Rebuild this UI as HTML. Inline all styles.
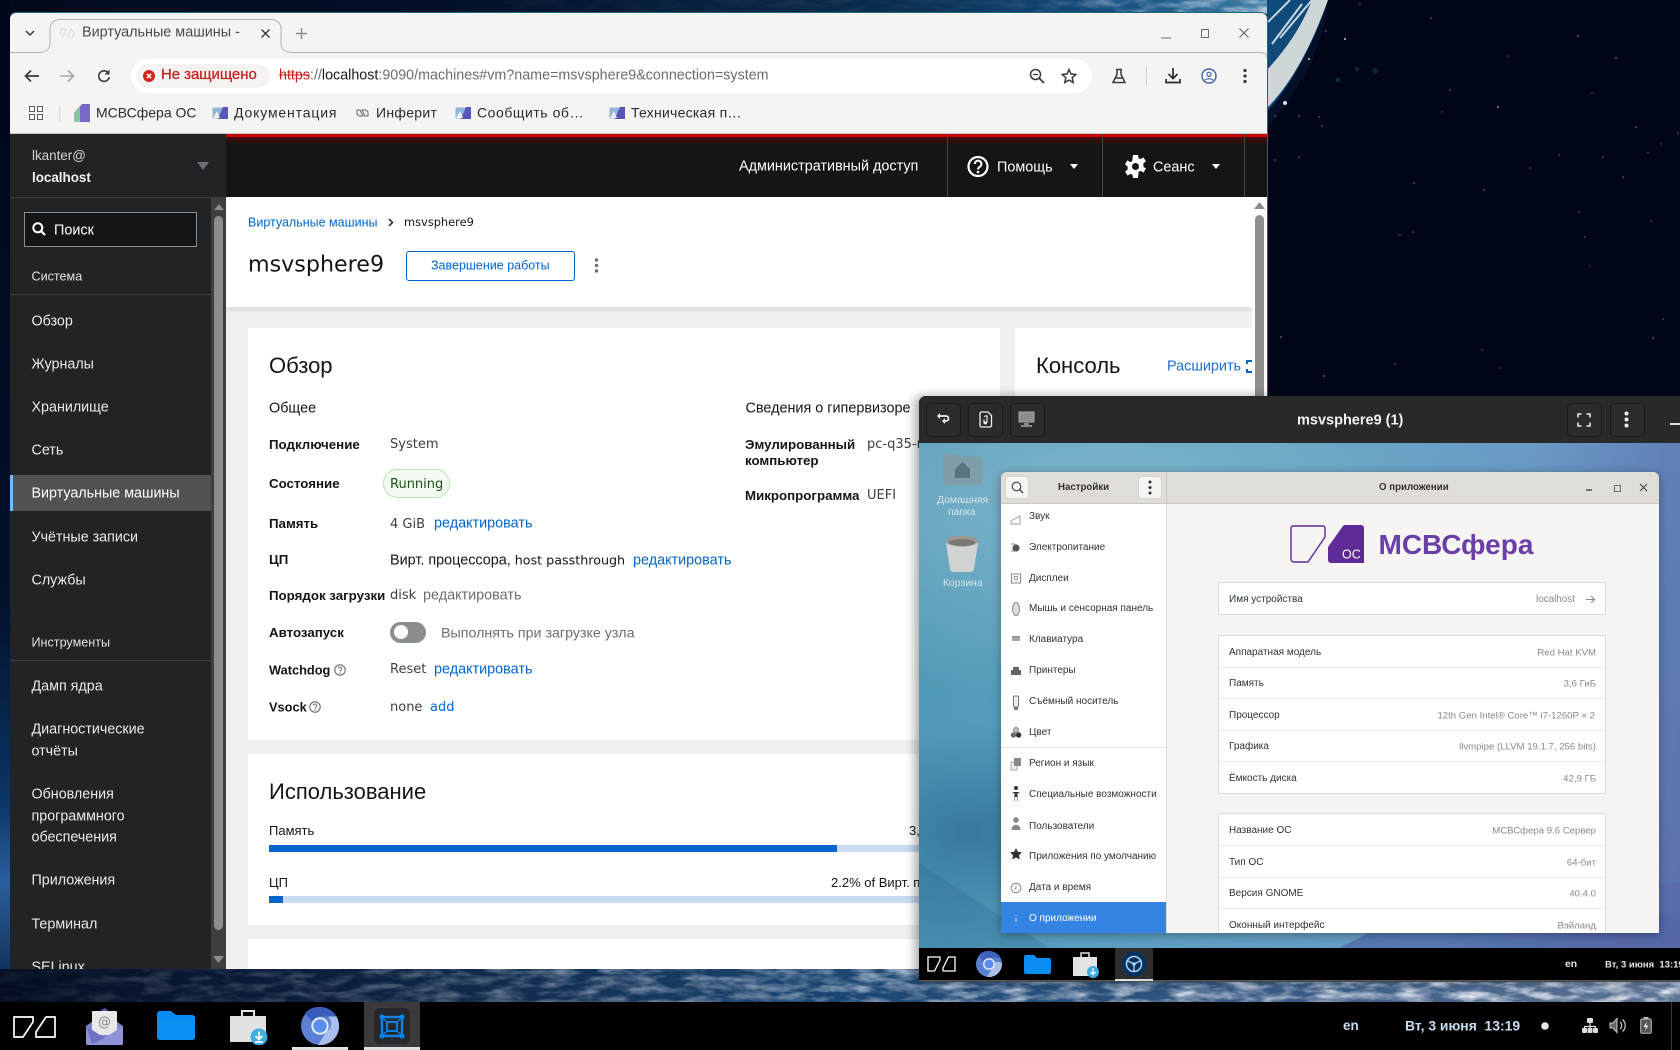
<!DOCTYPE html>
<html lang="ru"><head><meta charset="utf-8"><title>Виртуальные машины</title>
<style>
html,body{margin:0;padding:0;width:1680px;height:1050px;overflow:hidden;background:#000518}
body{position:relative;font-family:"Liberation Sans","DejaVu Sans",sans-serif;font-size:14px;color:#151515}
.a,.t,svg.i{position:absolute}
.t{white-space:nowrap;transform:translateY(-50%);line-height:1.2}
.s{color:#e8e9ea;font-size:14.3px}
.h{font-size:13px;color:#e0e1e2}
.b{font-weight:bold;font-size:13.3px;color:#151515}
.v{font-size:13.4px;color:#151515}
.l{color:#06c}
.d{font-family:"DejaVu Sans","Liberation Sans",sans-serif;font-size:13px}
.g{color:#6a6e73}
.w{color:#fff}
.m{font-size:14px;color:#2b2b2b}
.n{font-size:9.7px;color:#2e3436}
.r{font-size:10px;color:#2e3436}
.q{font-size:9.6px;color:#85898a;right:84px;text-align:right}
.row{position:absolute;left:0;right:0;height:1px;background:#ececeb}
</style></head><body>

<!-- wallpaper -->
<svg class="a" style="left:0;top:0" width="1680" height="1050">
<defs>
<linearGradient id="bs" x1="0" x2="1" y1="0" y2="0"><stop offset="0" stop-color="#050e22"/><stop offset=".2" stop-color="#0b1f3c"/><stop offset=".5" stop-color="#1b4672"/><stop offset=".72" stop-color="#31557f"/><stop offset="1" stop-color="#5e7596"/></linearGradient>
<linearGradient id="ts" x1="0" x2="1" y1="0" y2="0"><stop offset="0" stop-color="#020a1d"/><stop offset=".35" stop-color="#031028"/><stop offset=".7" stop-color="#0a2c4e"/><stop offset=".88" stop-color="#124d7e"/><stop offset="1" stop-color="#3f7ea6"/></linearGradient>
<linearGradient id="ls" x1="0" x2="0" y1="0" y2="1"><stop offset="0" stop-color="#01061a"/><stop offset=".6" stop-color="#03112a"/><stop offset=".8" stop-color="#0b3566"/><stop offset=".88" stop-color="#2a5f9c"/><stop offset="1" stop-color="#0a2346"/></linearGradient>
<linearGradient id="fade" x1="0" x2="1" y1="0" y2="0"><stop offset="0" stop-color="#fff" stop-opacity=".05"/><stop offset=".3" stop-color="#fff" stop-opacity=".4"/><stop offset=".6" stop-color="#fff" stop-opacity=".7"/><stop offset="1" stop-color="#fff" stop-opacity="1"/></linearGradient>
<linearGradient id="fade2" x1="0" x2="1" y1="0" y2="0"><stop offset="0" stop-color="#fff" stop-opacity="0"/><stop offset=".6" stop-color="#fff" stop-opacity=".08"/><stop offset=".75" stop-color="#fff" stop-opacity=".75"/></linearGradient>
<mask id="mk"><rect width="1680" height="1050" fill="url(#fade)"/></mask>
<mask id="mk2"><rect width="1680" height="1050" fill="url(#fade2)"/></mask>
<filter id="cl" x="0" y="0" width="100%" height="100%"><feTurbulence type="fractalNoise" baseFrequency=".035 .13" numOctaves="4" seed="7"/><feColorMatrix values="0 0 0 0 .9 0 0 0 0 .93 0 0 0 0 1 1.6 1.6 0 0 -1.35"/></filter>
</defs>
<rect width="1680" height="1050" fill="#000518"/>
<rect x="0" y="0" width="1267" height="14" fill="url(#ts)"/>
<path d="M1267 0H1328C1315 40 1295 80 1267 112Z" fill="#0f4a78"/>
<path d="M1267 108C1290 85 1310 50 1328 0L1312 0C1300 30 1285 50 1267 70Z" fill="#cfd6d8"/>
<path d="M1290 0L1268 22M1312 0L1280 38M1302 4L1272 44" stroke="#c6d8e2" stroke-width="2" fill="none"/>
<path d="M1267 112C1295 80 1315 40 1328 0C1322 60 1290 100 1267 128Z" fill="#02142e" opacity=".8"/>
<rect x="0" y="0" width="10" height="1002" fill="url(#ls)"/>
<rect x="0" y="969" width="1680" height="34" fill="url(#bs)"/>
<g mask="url(#mk)"><rect x="0" y="969" width="1680" height="34" filter="url(#cl)"/></g>
<g mask="url(#mk2)"><rect x="500" y="0" width="767" height="14" filter="url(#cl)"/></g>
<g fill="#6f7884">
<circle cx="1578" cy="36" r=".9"/><circle cx="1616" cy="58" r=".9"/><circle cx="1508" cy="56" r=".8"/><circle cx="1498" cy="107" r="1.1"/><circle cx="1450" cy="90" r=".8"/><circle cx="1345" cy="39" r="1" fill="#bcc"/><circle cx="1309" cy="59" r="1" fill="#bcc"/><circle cx="1285" cy="103" r="2" fill="#dde"/><circle cx="1360" cy="4" r=".8"/><circle cx="1326" cy="31" r=".8"/><circle cx="1431" cy="18" r=".8"/><circle cx="1636" cy="127" r=".8"/><circle cx="1678" cy="133" r=".8"/><circle cx="1623" cy="177" r=".8"/><circle cx="1661" cy="144" r=".7"/><circle cx="1603" cy="157" r=".8"/><circle cx="1530" cy="168" r=".8"/><circle cx="1484" cy="190" r=".8"/><circle cx="1414" cy="183" r=".8"/><circle cx="1413" cy="232" r=".8"/><circle cx="1400" cy="235" r=".8"/><circle cx="1585" cy="237" r=".7"/><circle cx="1579" cy="212" r=".7"/><circle cx="1651" cy="221" r=".7"/><circle cx="1281" cy="337" r=".9"/><circle cx="1324" cy="376" r=".9"/><circle cx="1395" cy="364" r=".7"/><circle cx="1482" cy="350" r=".7"/><circle cx="1500" cy="368" r=".7"/><circle cx="1653" cy="338" r=".9"/><circle cx="1663" cy="319" r=".7"/><circle cx="1590" cy="266" r=".6"/><circle cx="1275" cy="116" r=".8"/><circle cx="1299" cy="116" r=".8"/><circle cx="1319" cy="117" r=".8"/><circle cx="1322" cy="126" r=".8"/><circle cx="1275" cy="160" r=".8" fill="#4a8"/><circle cx="1299" cy="157" r=".8" fill="#488"/><circle cx="1442" cy="112" r=".7"/><circle cx="1592" cy="93" r=".7"/><circle cx="1648" cy="153" r=".7"/><circle cx="1559" cy="155" r=".7"/>
<circle cx="1338" cy="80" r="2.500" fill="#0a2c3c"/><circle cx="1375" cy="71" r="2.500" fill="#0a2c3c"/><circle cx="1357" cy="69" r="2" fill="#0a2c3c"/>
</g>
</svg>

<!-- browser -->
<div class="a" style="left:10px;top:13px;width:1257px;height:956px;background:#f5f4f2;border-radius:6px 6px 0 0;box-shadow:1px 0 0 #1e6a78,0 -1px 0 #1e6a78;overflow:hidden" id="br">
<svg class="a" style="left:0;top:0" width="1257" height="45"><path d="M0 39.500H28C36 39.500 40 36 40 30V16C40 10 44 6.500 50 6.500H261C267 6.500 271 10 271 16V30C271 36 275 39.500 283 39.500H1251C1254 39.500 1256 41 1257 44" fill="none" stroke="#b4b3b1" stroke-width="1"/></svg>
</div>
<span class="t m" style="left:82px;top:33px;font-size:14.4px;color:#4a4a48;width:163px;overflow:hidden">Виртуальные машины - Веб-консоль</span>
<svg class="i" style="left:24px;top:28px" width="12" height="10"><path d="M2 3l4 4 4-4" fill="none" stroke="#333" stroke-width="1.4"/></svg>
<svg class="i" style="left:59px;top:28px" width="16" height="10"><path d="M2 1l5 0-3 8-3-4zM14 9h-5l3-8 3 4z" fill="none" stroke="#dcdbd9" stroke-width="1"/></svg>
<svg class="i" style="left:260px;top:28px" width="11" height="11"><path d="M1.500 1.500l8 8M9.500 1.500l-8 8" stroke="#333" stroke-width="1.300"/></svg>
<svg class="i" style="left:295px;top:27px" width="13" height="13"><path d="M6.500 1v11M1 6.500h11" stroke="#8f8e8c" stroke-width="1.400"/></svg>
<svg class="i" style="left:1160px;top:31px" width="12" height="8"><path d="M1 6h10" stroke="#8f8e8c" stroke-width="1.300" transform="translate(0,1)"/></svg>
<svg class="i" style="left:1200px;top:28px" width="10" height="11"><rect x="1.500" y="1.500" width="7" height="8" fill="none" stroke="#6d6c6a" stroke-width="1"/></svg>
<svg class="i" style="left:1238px;top:27px" width="12" height="12"><path d="M1.500 1.500l9 9M10.500 1.500l-9 9" stroke="#6d6c6a" stroke-width="1.200"/></svg>

<svg class="i" style="left:24px;top:69px" width="16" height="14"><path d="M15 7H2M7 1.500L1.500 7 7 12.500" fill="none" stroke="#3a3a3a" stroke-width="1.700"/></svg>
<svg class="i" style="left:59px;top:69px" width="16" height="14"><path d="M1 7h13M9 1.500L14.500 7 9 12.500" fill="none" stroke="#aaa9a7" stroke-width="1.600"/></svg>
<svg class="i" style="left:97px;top:69px" width="14" height="14"><path d="M11.500 4.200A5.300 5.300 0 1 0 12.300 8" fill="none" stroke="#3a3a3a" stroke-width="1.600"/><path d="M12.500 0.500v5h-5z" fill="#3a3a3a"/></svg>
<div class="a" style="left:131px;top:59px;width:961px;height:34px;background:#fff;border-radius:17px"></div>
<div class="a" style="left:136px;top:64px;width:134px;height:24px;background:#f4f3f1;border-radius:12px"></div>
<svg class="i" style="left:143px;top:70px" width="12" height="12"><circle cx="6" cy="6" r="6" fill="#d3231c"/><path d="M3.800 3.800l4.400 4.400M8.200 3.800l-4.400 4.400" stroke="#fff" stroke-width="1.400"/></svg>
<span class="t" style="left:161px;top:76px;color:#c5221f;font-size:14.900px;-webkit-text-stroke:.3px #c5221f">Не защищено</span>
<span class="t" style="left:279px;top:76px;font-size:14.300px;color:#6c6c6a"><span style="color:#c5221f;text-decoration:line-through">https</span>://<span style="color:#1a1a1a">localhost</span>:9090/machines#vm?name=msvsphere9&amp;connection=system</span>
<svg class="i" style="left:1029px;top:68px" width="16" height="16"><circle cx="6.500" cy="6.500" r="5" fill="none" stroke="#3a3a3a" stroke-width="1.500"/><path d="M10.500 10.500l4.500 4.500" stroke="#3a3a3a" stroke-width="1.800"/><path d="M4 6.500h5" stroke="#3a3a3a" stroke-width="1.300"/></svg>
<svg class="i" style="left:1061px;top:68px" width="16" height="16"><path d="M8 1.500l2 4.500 4.800.5-3.600 3.200 1 4.800L8 12.100l-4.200 2.400 1-4.800L1.200 6.500 6 6z" fill="none" stroke="#3a3a3a" stroke-width="1.500"/></svg>
<svg class="i" style="left:1111px;top:68px" width="16" height="16"><path d="M5 1.500h6M6 1.500V6.500L2 14.500H14L10 6.500V1.500M4.500 10H11.500" fill="none" stroke="#3a3a3a" stroke-width="1.500"/></svg>
<div class="a" style="left:1146px;top:66px;width:1px;height:20px;background:#d5d4d2"></div>
<svg class="i" style="left:1165px;top:67px" width="16" height="17"><path d="M8 1v10M3.500 7L8 11.500 12.500 7" fill="none" stroke="#2b2b2b" stroke-width="1.700"/><path d="M1 12v3.500h14V12" fill="none" stroke="#2b2b2b" stroke-width="1.700"/></svg>
<svg class="i" style="left:1201px;top:68px" width="16" height="16"><circle cx="8" cy="8" r="7" fill="#fff" stroke="#3f63a8" stroke-width="1.400"/><circle cx="8" cy="6.300" r="2.100" fill="none" stroke="#3f63a8" stroke-width="1.200"/><path d="M3.800 12.300c1-2 7.400-2 8.400 0" fill="none" stroke="#3f63a8" stroke-width="1.200"/></svg>
<svg class="i" style="left:1243px;top:68px" width="4" height="16"><circle cx="2" cy="2.500" r="1.600" fill="#333"/><circle cx="2" cy="8" r="1.600" fill="#333"/><circle cx="2" cy="13.500" r="1.600" fill="#333"/></svg>

<svg class="i" style="left:29px;top:106px" width="14" height="14"><path d="M.5.500h5v5h-5zM8.500.500h5v5h-5zM.5 8.500h5v5h-5zM8.500 8.500h5v5h-5z" fill="none" stroke="#5f5e5c"/></svg>
<div class="a" style="left:59px;top:105px;width:1px;height:16px;background:#d5d4d2"></div>
<svg class="i" style="left:74px;top:104px" width="16" height="18"><path d="M0 9L8 0H16V18H0Z" fill="#7a68c6"/><path d="M0 9L6 3V18H0Z" fill="#8bc6a0"/></svg>
<span class="t m" style="left:96px;top:113px">МСВСфера ОС</span>
<svg class="i" style="left:212px;top:107px" width="16" height="12"><rect x=".5" y=".5" width="15" height="11" fill="#8fb6dc"/><path d="M6 11.500L11 0H16V12H6Z" fill="#5a56b8"/><path d="M1 11L5 4 8 11Z" fill="#eee"/></svg>
<span class="t m" style="left:234px;top:113px;letter-spacing:.85px">Документация</span>
<svg class="i" style="left:356px;top:109px" width="13" height="8"><path d="M1 1h3l3 6H3L1 5zM12 7H9L6 1h4l2 2z" fill="none" stroke="#666" stroke-width="1"/></svg>
<span class="t m" style="left:376px;top:113px;letter-spacing:.3px">Инферит</span>
<svg class="i" style="left:455px;top:107px" width="16" height="12"><rect x=".5" y=".5" width="15" height="11" fill="#8fb6dc"/><path d="M6 11.500L11 0H16V12H6Z" fill="#5a56b8"/><path d="M1 11L5 4 8 11Z" fill="#eee"/></svg>
<span class="t m" style="left:477px;top:113px;letter-spacing:.55px">Сообщить об…</span>
<svg class="i" style="left:609px;top:107px" width="16" height="12"><rect x=".5" y=".5" width="15" height="11" fill="#8fb6dc"/><path d="M6 11.500L11 0H16V12H6Z" fill="#5a56b8"/><path d="M1 11L5 4 8 11Z" fill="#eee"/></svg>
<span class="t m" style="left:631px;top:113px;letter-spacing:.25px">Техническая п…</span>

<!-- cockpit header -->
<div class="a" style="left:10px;top:133px;width:1257px;height:1px;background:#c9c8c6"></div>
<div class="a" style="left:226px;top:134px;width:1041px;height:63px;background:#151515"></div>
<div class="a" style="left:226px;top:134px;width:1041px;height:3px;background:#c9000a"></div>
<div class="a" style="left:226px;top:137px;width:1041px;height:8px;background:linear-gradient(#4a0a0a,#151515)"></div>
<div class="a" style="left:947px;top:134px;width:1px;height:63px;background:#444"></div>
<div class="a" style="left:1102px;top:134px;width:1px;height:63px;background:#444"></div>
<div class="a" style="left:1244px;top:134px;width:1px;height:63px;background:#444"></div>
<span class="t w" style="left:739px;top:167px;font-size:14.4px">Административный доступ</span>
<svg class="i" style="left:967px;top:155px" width="22" height="23"><circle cx="11" cy="11.500" r="9.500" fill="none" stroke="#fff" stroke-width="2.200"/><path d="M7.800 9a3.300 3.300 0 1 1 5 2.800c-1.200.8-1.800 1.400-1.800 2.700" fill="none" stroke="#fff" stroke-width="2"/><circle cx="11" cy="17" r="1.300" fill="#fff"/></svg>
<span class="t w" style="left:997px;top:167.500px;font-size:14.4px">Помощь</span>
<svg class="i" style="left:1070px;top:164px" width="8" height="6"><path d="M0 0h8L4 5z" fill="#fff"/></svg>
<svg class="i" style="left:1125px;top:155px" width="21" height="23" viewBox="0 0 21 23"><path fill="#fff" fill-rule="evenodd" d="M8 0h5l.6 3.200 2 .9 2.800-1.700 2.500 4-2.500 2v3.200l2.500 2-2.500 4-2.800-1.700-2 .9L13 23H8l-.6-3.200-2-.9-2.800 1.700-2.500-4 2.500-2V11.400L-.1 9.400l2.500-4 2.800 1.700 2-.9zM10.500 8a3.500 3.500 0 1 0 0 7 3.500 3.500 0 0 0 0-7z"/></svg>
<span class="t w" style="left:1153px;top:167.500px;font-size:14.4px">Сеанс</span>
<svg class="i" style="left:1212px;top:164px" width="8" height="6"><path d="M0 0h8L4 5z" fill="#fff"/></svg>

<!-- sidebar -->
<div class="a" style="left:10px;top:134px;width:216px;height:835px;background:#212427;overflow:hidden">
  <div class="a" style="left:0;top:63px;width:216px;height:1px;background:#3c3f42"></div>
  <div class="a" style="left:201px;top:64px;width:15px;height:771px;background:#3c3f42"></div>
  <div class="a" style="left:204px;top:82px;width:9px;height:714px;background:#8a8d90;border-radius:5px"></div>
  <div class="a" style="left:0;top:341px;width:201px;height:36px;background:#4f5255"></div>
  <div class="a" style="left:0;top:341px;width:3px;height:36px;background:#73bcf7"></div>
  <div class="a" style="left:0;top:160px;width:201px;height:1px;background:#3c3f42"></div>
  <div class="a" style="left:0;top:526px;width:201px;height:1px;background:#3c3f42"></div>
</div>
<svg class="i" style="left:214px;top:204px" width="10" height="7"><path d="M5 0l5 6H0z" fill="#8a8d90"/></svg>
<svg class="i" style="left:213px;top:956px" width="11" height="7"><path d="M5.500 7L11 0H0z" fill="#8a8d90"/></svg>
<svg class="i" style="left:197px;top:162px" width="12" height="8"><path d="M0 0h12L6 8z" fill="#6a6e73"/></svg>
<span class="t h" style="left:32px;top:155.500px;font-size:13.4px;color:#d2d2d2">lkanter@</span>
<span class="t h" style="left:32px;top:178px;font-weight:bold;font-size:13.4px;color:#f0f0f0">localhost</span>
<div class="a" style="left:24px;top:212px;width:171px;height:33px;background:#151515;border:1px solid #8a8d90"></div>
<svg class="i" style="left:32px;top:222px" width="14" height="14"><circle cx="5.800" cy="5.800" r="4.500" fill="none" stroke="#fff" stroke-width="2"/><path d="M9 9l4 4" stroke="#fff" stroke-width="2.200"/></svg>
<span class="t w" style="left:54px;top:230.500px;font-size:14.4px">Поиск</span>
<span class="t h" style="left:31.500px;top:276.500px;font-size:12.6px">Система</span>
<span class="t s" style="left:31.500px;top:322px">Обзор</span>
<span class="t s" style="left:31.500px;top:365px">Журналы</span>
<span class="t s" style="left:31.500px;top:408px">Хранилище</span>
<span class="t s" style="left:31.500px;top:451px">Сеть</span>
<span class="t s" style="left:31.500px;top:494px;color:#fff">Виртуальные машины</span>
<span class="t s" style="left:31.500px;top:538px">Учётные записи</span>
<span class="t s" style="left:31.500px;top:581px">Службы</span>
<span class="t h" style="left:31.500px;top:642.500px;font-size:12.6px">Инструменты</span>
<span class="t s" style="left:31.500px;top:687px">Дамп ядра</span>
<span class="t s" style="left:31.500px;top:730px">Диагностические</span>
<span class="t s" style="left:31.500px;top:752px">отчёты</span>
<span class="t s" style="left:31.500px;top:795px">Обновления</span>
<span class="t s" style="left:31.500px;top:817px">программного</span>
<span class="t s" style="left:31.500px;top:838px">обеспечения</span>
<span class="t s" style="left:31.500px;top:881px">Приложения</span>
<span class="t s" style="left:31.500px;top:925px">Терминал</span>
<div class="a" style="left:10px;top:950px;width:201px;height:19px;overflow:hidden"><span class="t s" style="left:21.500px;top:18px">SELinux</span></div>

<!-- main content -->
<div class="a" style="left:226px;top:197px;width:1041px;height:772px;background:#fff;box-shadow:1px 0 0 #1e6a78"></div>
<div class="a" style="left:226px;top:307px;width:1026px;height:662px;background:#f0f0f0"></div>
<div class="a" style="left:226px;top:304px;width:1026px;height:3px;box-shadow:0 3px 4px rgba(0,0,0,.12)"></div>
<svg class="i" style="left:1254px;top:202px" width="11" height="7"><path d="M5.500 0L11 7H0z" fill="#8a8a8a"/></svg>
<div class="a" style="left:1255px;top:215px;width:9px;height:185px;background:#8f8f8f;border-radius:5px 5px 0 0"></div>
<span class="t l" style="left:248px;top:222.500px;font-size:12.5px">Виртуальные машины</span>
<svg class="i" style="left:388px;top:218px" width="6" height="9"><path d="M1 1l3.500 3.500L1 8" fill="none" stroke="#222" stroke-width="1.500"/></svg>
<span class="t d" style="left:404px;top:222.500px;font-size:11.400px">msvsphere9</span>
<span class="t d" style="left:248px;top:265px;font-size:22.200px">msvsphere9</span>
<div class="a" style="left:406px;top:251px;width:167px;height:28px;border:1px solid #06c;border-radius:3px;background:#fff"></div>
<span class="t l" style="left:431px;top:265.500px;font-size:12.500px">Завершение работы</span>
<svg class="i" style="left:594px;top:258px" width="5" height="15"><circle cx="2.500" cy="2" r="1.700" fill="#6a6e73"/><circle cx="2.500" cy="7.500" r="1.700" fill="#6a6e73"/><circle cx="2.500" cy="13" r="1.700" fill="#6a6e73"/></svg>

<div class="a" style="left:248px;top:328px;width:752px;height:412px;background:#fff"></div>
<div class="a" style="left:248px;top:754px;width:752px;height:171px;background:#fff"></div>
<div class="a" style="left:248px;top:939px;width:752px;height:30px;background:#fff"></div>
<div class="a" style="left:1015px;top:328px;width:237px;height:641px;background:#fff"></div>

<span class="t" style="left:269px;top:366px;font-size:22px">Обзор</span>
<span class="t v" style="left:269px;top:409px;font-size:14.400px">Общее</span>
<span class="t v" style="left:745.500px;top:409px;font-size:14.400px">Сведения о гипервизоре</span>
<span class="t b" style="left:269px;top:444.500px">Подключение</span>
<span class="t d g" style="left:390px;top:445px;color:#3c3f42;font-size:13px">System</span>
<span class="t b" style="left:269px;top:483.500px">Состояние</span>
<div class="a" style="left:383px;top:469px;width:65px;height:27px;border:1px solid #bde2b9;background:#f3faf2;border-radius:15px"></div>
<span class="t d" style="left:390px;top:484.500px;color:#1e4f18;font-size:13px">Running</span>
<span class="t b" style="left:269px;top:524px">Память</span>
<span class="t d" style="left:390px;top:524.500px;color:#3c3f42">4 GiB</span>
<span class="t v l" style="left:434px;top:524px;font-size:14.400px">редактировать</span>
<span class="t b" style="left:269px;top:559.500px">ЦП</span>
<span class="t v" style="left:390px;top:560.500px;font-size:14.400px">Вирт. процессора, <span style="font-family:'DejaVu Sans';font-size:12.700px">host passthrough</span></span>
<span class="t v l" style="left:633px;top:560.500px;font-size:14.400px">редактировать</span>
<span class="t b" style="left:269px;top:595.500px">Порядок загрузки</span>
<span class="t d" style="left:390px;top:595.500px;color:#3c3f42">disk</span>
<span class="t v g" style="left:423px;top:595.500px;font-size:14.400px;color:#6a6e73">редактировать</span>
<span class="t b" style="left:269px;top:633px">Автозапуск</span>
<div class="a" style="left:390px;top:622px;width:36px;height:21px;background:#8a8d90;border-radius:11px"></div>
<div class="a" style="left:394px;top:625px;width:14px;height:14px;background:#fff;border-radius:7px"></div>
<span class="t v g" style="left:441px;top:634px;font-size:14.250px">Выполнять при загрузке узла</span>
<span class="t b" style="left:269px;top:669.500px;font-size:12.800px">Watchdog</span>
<svg class="i" style="left:334px;top:664px" width="12" height="12"><circle cx="6" cy="6" r="5.200" fill="none" stroke="#6a6e73" stroke-width="1.100"/><path d="M4.300 4.700a1.700 1.700 0 1 1 2.600 1.500c-.6.400-.9.700-.9 1.300" fill="none" stroke="#6a6e73"/><circle cx="6" cy="9" r=".7" fill="#6a6e73"/></svg>
<span class="t d" style="left:390px;top:670px;color:#3c3f42">Reset</span>
<span class="t v l" style="left:434px;top:670px;font-size:14.400px">редактировать</span>
<span class="t b" style="left:269px;top:707px;font-size:12.800px">Vsock</span>
<svg class="i" style="left:309px;top:701px" width="12" height="12"><circle cx="6" cy="6" r="5.200" fill="none" stroke="#6a6e73" stroke-width="1.100"/><path d="M4.300 4.700a1.700 1.700 0 1 1 2.600 1.500c-.6.400-.9.700-.9 1.300" fill="none" stroke="#6a6e73"/><circle cx="6" cy="9" r=".7" fill="#6a6e73"/></svg>
<span class="t d" style="left:390px;top:707.500px;color:#3c3f42">none</span>
<span class="t d l" style="left:430px;top:707.500px">add</span>
<span class="t b" style="left:745px;top:444.500px">Эмулированный</span>
<span class="t b" style="left:745px;top:461px">компьютер</span>
<span class="t d" style="left:867px;top:444.500px;color:#3c3f42">pc-q35-rhel9</span>
<span class="t b" style="left:745px;top:495.500px">Микропрограмма</span>
<span class="t d" style="left:867px;top:495.500px;color:#3c3f42">UEFI</span>

<span class="t" style="left:269px;top:791.500px;font-size:22px">Использование</span>
<span class="t v" style="left:269px;top:830.500px;font-size:13px">Память</span>
<div class="a" style="left:269px;top:845px;width:660px;height:7px;background:#c9dcf2"></div>
<div class="a" style="left:269px;top:845px;width:568px;height:7px;background:#06c"></div>
<span class="t v" style="left:909px;top:830.500px;font-size:13px">3,5 / 4 GiB</span>
<span class="t v" style="left:269px;top:883px;font-size:13px">ЦП</span>
<span class="t v" style="left:831px;top:883px;font-size:13px">2.2% of Вирт. процессора</span>
<div class="a" style="left:269px;top:896px;width:660px;height:7px;background:#c9dcf2"></div>
<div class="a" style="left:269px;top:896px;width:14px;height:7px;background:#06c"></div>

<span class="t" style="left:1036px;top:366px;font-size:22px">Консоль</span>
<span class="t l" style="left:1167px;top:367px;font-size:14.400px;color:#1a6fd0">Расширить</span>
<svg class="i" style="left:1246px;top:360px" width="6" height="13"><path d="M6 1H1v3M1 9v3h5" fill="none" stroke="#06c" stroke-width="2"/></svg>

<!-- VM window -->
<div class="a" style="left:919px;top:396px;width:761px;height:585px;background:#000;box-shadow:-4px 0 10px rgba(0,0,0,.35),0 1px 0 #555;border-radius:7px 0 0 0;overflow:hidden">
  <div class="a" style="left:0;top:0;width:761px;height:47px;background:#292929"></div>
  <div class="a" style="left:0;top:47px;width:761px;height:505px;background:radial-gradient(ellipse 160px 110px at 50px 390px,rgba(47,111,150,.8) 0%,rgba(47,111,150,0) 100%),radial-gradient(ellipse 420px 200px at 180px 60px,#7fb4cb 0%,rgba(127,180,203,0) 100%),linear-gradient(100deg,#4e9ab6 0%,#5ea0c2 40%,#6a9ac4 72%,#5a70ae 100%)"></div>
  <svg class="a" style="left:0;top:47px" width="761" height="505"><path d="M420 505L490 470H761V505Z" fill="#41569a" opacity=".5"/><path d="M640 505L700 440H761V505Z" fill="#5c69ad" opacity=".6"/><path d="M0 420L130 505H0Z" fill="#2e6d94" opacity=".35"/></svg>
  <div class="a" style="left:0;top:552px;width:761px;height:32px;background:#000"></div>
  <div class="a" style="left:0;top:584px;width:761px;height:1px;background:#555"></div>
</div>
<div class="a" style="left:926px;top:403px;width:33px;height:32px;background:#2b2b2b;border:1px solid #1a1a1a;border-radius:5px"></div>
<div class="a" style="left:968px;top:403px;width:33px;height:32px;background:#2b2b2b;border:1px solid #1a1a1a;border-radius:5px"></div>
<div class="a" style="left:1010px;top:403px;width:33px;height:32px;background:#2b2b2b;border:1px solid #1a1a1a;border-radius:5px"></div>
<div class="a" style="left:1567px;top:403px;width:33px;height:32px;background:#2b2b2b;border:1px solid #1a1a1a;border-radius:5px"></div>
<div class="a" style="left:1610px;top:403px;width:33px;height:32px;background:#2b2b2b;border:1px solid #1a1a1a;border-radius:5px"></div>
<svg class="i" style="left:936px;top:412px" width="15" height="15"><path d="M2 4h8a2.500 2.500 0 0 1 0 5H7" fill="none" stroke="#eee" stroke-width="1.800"/><path d="M4 1L1 4l3 3z" fill="#eee"/><path d="M9 6l-3 3 3 3z" fill="#eee"/></svg>
<svg class="i" style="left:978px;top:411px" width="15" height="17"><path d="M2 2.500a1.500 1.500 0 0 1 1.500-1.500H10l3.500 3.500v10A1.500 1.500 0 0 1 12 16H3.500A1.500 1.500 0 0 1 2 14.500z" fill="none" stroke="#eee" stroke-width="1.300"/><path d="M9 4.500v7M6 8.500v4" stroke="#eee" stroke-width="1.200"/><circle cx="7.500" cy="12" r="1.500" fill="#eee"/><path d="M6 5.500l3-1" stroke="#eee"/></svg>
<svg class="i" style="left:1018px;top:411px" width="17" height="17"><rect x="1" y="1" width="15" height="10" fill="#8c8c8c" stroke="#aaa"/><path d="M6 12h5v2h3v2H3v-2h3z" fill="#888"/></svg>
<span class="t w" style="left:1297px;top:421px;font-weight:bold;font-size:14.500px;color:#f2f2f2">msvsphere9 (1)</span>
<svg class="i" style="left:1577px;top:413px" width="14" height="14"><path d="M1 4.500V1h3.500M9.500 1H13v3.500M13 9.500V13H9.500M4.500 13H1V9.500" fill="none" stroke="#eee" stroke-width="1.500"/></svg>
<svg class="i" style="left:1624px;top:411px" width="5" height="17"><circle cx="2.500" cy="2.500" r="2" fill="#eee"/><circle cx="2.500" cy="8.500" r="2" fill="#eee"/><circle cx="2.500" cy="14.500" r="2" fill="#eee"/></svg>
<div class="a" style="left:1670px;top:423px;width:10px;height:1.500px;background:#ddd"></div>

<!-- desktop icons -->
<svg class="i" style="left:942px;top:454px" width="41" height="31"><path d="M1 3a3 3 0 0 1 3-3h10l3 3h20a3 3 0 0 1 3 3v22a3 3 0 0 1-3 3H4a3 3 0 0 1-3-3z" fill="#7f9ea9"/><path d="M13 15l7.500-7 7.500 7v9H13z" fill="#55757f" /></svg>
<span class="t" style="left:937px;top:500.500px;font-size:10.400px;color:#d7e4ea">Домашняя</span>
<span class="t" style="left:948px;top:513px;font-size:10.400px;color:#d7e4ea">папка</span>
<svg class="i" style="left:945px;top:535px" width="34" height="38"><path d="M1 8L5 34a4 4 0 0 0 4 3H25a4 4 0 0 0 4-3L33 8Z" fill="#cfd3d2"/><ellipse cx="17" cy="6" rx="16" ry="5.500" fill="#9a9a95"/><ellipse cx="17" cy="7.500" rx="13" ry="3.500" fill="#7a7a75"/></svg>
<span class="t" style="left:943px;top:584px;font-size:10.400px;color:#d7e4ea">Корзина</span>

<!-- settings window -->
<div class="a" style="left:1001px;top:472px;width:658px;height:461px;background:#f6f5f4;border-radius:6px 6px 0 0;box-shadow:0 2px 10px rgba(0,0,0,.35);overflow:hidden">
  <div class="a" style="left:0;top:0;width:658px;height:31px;background:#e0ddd8;border-bottom:1px solid #cdc7c2"></div>
  <div class="a" style="left:0;top:32px;width:165px;height:429px;background:#fff;border-right:1px solid #dcdad7"></div>
  <div class="a" style="left:165px;top:0;width:1px;height:32px;background:#cdc7c2"></div>
  <div class="a" style="left:0;top:275px;width:165px;height:1px;background:#e6e5e3"></div>
  <div class="a" style="left:0;top:430px;width:165px;height:31px;background:#3584e4"></div>
  <div class="a" style="left:5px;top:5px;width:22px;height:21px;background:#f6f5f4;border-radius:3px;box-shadow:0 0 1px #aaa"></div>
  <div class="a" style="left:138px;top:5px;width:22px;height:21px;background:#f6f5f4;border-radius:3px;box-shadow:0 0 1px #aaa"></div>
  <div class="a" style="left:218px;top:111px;width:386px;height:31px;background:#fff;box-shadow:0 0 0 1px #dcdad7"></div>
  <div class="a" style="left:218px;top:164px;width:386px;height:157px;background:#fff;box-shadow:0 0 0 1px #dcdad7">
    <div class="row" style="top:31px"></div><div class="row" style="top:62px"></div><div class="row" style="top:94px"></div><div class="row" style="top:125px"></div>
  </div>
  <div class="a" style="left:218px;top:342px;width:386px;height:130px;background:#fff;box-shadow:0 0 0 1px #dcdad7">
    <div class="row" style="top:31px"></div><div class="row" style="top:63px"></div><div class="row" style="top:94px"></div>
  </div>
</div>
<svg class="i" style="left:1011px;top:481px" width="13" height="13"><circle cx="5.500" cy="5.500" r="4.300" fill="none" stroke="#3d3d3d" stroke-width="1.100"/><path d="M8.500 8.500l3.500 3.500" stroke="#3d3d3d" stroke-width="1.300"/></svg>
<svg class="i" style="left:1148px;top:480px" width="4" height="15"><circle cx="2" cy="2" r="1.500" fill="#2e3436"/><circle cx="2" cy="7.500" r="1.500" fill="#2e3436"/><circle cx="2" cy="13" r="1.500" fill="#2e3436"/></svg>
<span class="t n" style="left:1058px;top:487.500px;font-weight:bold">Настройки</span>
<span class="t n" style="left:1379px;top:487.500px;font-weight:bold">О приложении</span>
<div class="a" style="left:1586px;top:489px;width:6px;height:1.500px;background:#6f6f6c"></div>
<div class="a" style="left:1614px;top:485px;width:5px;height:5px;border:1px solid #6f6f6c"></div>
<svg class="i" style="left:1639px;top:483px" width="9" height="9"><path d="M1 1l7 7M8 1L1 8" stroke="#444" stroke-width="1.100"/></svg>

<!-- settings list -->
<span class="t r" style="left:1029px;top:516.500px">Звук</span>
<span class="t r" style="left:1029px;top:547.500px">Электропитание</span>
<span class="t r" style="left:1029px;top:578.500px">Дисплеи</span>
<span class="t r" style="left:1029px;top:609px">Мышь и сенсорная панель</span>
<span class="t r" style="left:1029px;top:640px">Клавиатура</span>
<span class="t r" style="left:1029px;top:671px">Принтеры</span>
<span class="t r" style="left:1029px;top:702px">Съёмный носитель</span>
<span class="t r" style="left:1029px;top:733px">Цвет</span>
<span class="t r" style="left:1029px;top:764px">Регион и язык</span>
<span class="t r" style="left:1029px;top:795px">Специальные возможности</span>
<span class="t r" style="left:1029px;top:826.500px">Пользователи</span>
<span class="t r" style="left:1029px;top:857px">Приложения по умолчанию</span>
<span class="t r" style="left:1029px;top:888px">Дата и время</span>
<span class="t r" style="left:1029px;top:919px;color:#fff">О приложении</span>
<svg class="i" style="left:1010px;top:511px" width="12" height="424" viewBox="0 0 12 424">
<path d="M1 10l9-5v8H1z" fill="none" stroke="#999" stroke-width=".9"/>
<circle cx="6" cy="37" r="3.600" fill="#555"/><path d="M1 33h4M1 40h4" stroke="#888"/>
<rect x="1.500" y="63" width="9" height="9" fill="none" stroke="#888"/><circle cx="6" cy="67" r="1.800" fill="none" stroke="#888"/>
<ellipse cx="6" cy="98" rx="3.400" ry="6.500" fill="#ddd" stroke="#888"/>
<path d="M2 125h8v5H2z" fill="#888"/><path d="M2 127h8M2 129h8" stroke="#fff" stroke-width=".5"/>
<path d="M3 156h6v3H3zM1 159h10v5H1z" fill="#666"/>
<rect x="3.500" y="185" width="5" height="11" rx="1" fill="#eee" stroke="#777"/><path d="M4 196v3h4v-3" fill="#777"/>
<circle cx="6" cy="219" r="2.500" fill="#bbb" stroke="#666" stroke-width=".7"/><circle cx="3.400" cy="224" r="2.700" fill="#666"/><circle cx="8.600" cy="224" r="2.700" fill="#333"/>
<rect x="1" y="251" width="6" height="8" fill="#eee" stroke="#888" stroke-width=".7"/><rect x="4" y="247" width="7" height="8" fill="#888"/>
<circle cx="6" cy="277" r="2" fill="#333"/><path d="M2 281h8l-2.500 1.500V290H7v-4H5v4H4.500v-7.500z" fill="#333"/>
<circle cx="6" cy="309" r="2.800" fill="#888"/><path d="M1.500 319c0-7 9-7 9 0z" fill="#888"/>
<path d="M6 337l1.800 3.800 4.200.5-3 2.900.8 4.300-3.800-2-3.800 2 .8-4.300-3-2.900 4.200-.5z" fill="#333"/>
<circle cx="6" cy="377" r="4.800" fill="none" stroke="#888"/><path d="M6 374.500V377l-2 1.500" fill="none" stroke="#888" stroke-width=".8"/>
<path d="M6 404v1.200M6 407v4" stroke="#cfe2f8" stroke-width="1"/>
</svg>

<!-- logo -->
<svg class="i" style="left:1290px;top:525px" width="75" height="39" viewBox="0 0 75 39"><path d="M1 3a2 2 0 0 1 2-2h30a2 2 0 0 1 2 2v9L18 37H4a3 3 0 0 1-3-3z" fill="none" stroke="#5e2b97" stroke-width="1.400" /><path d="M38 22L53 1a3 3 0 0 1 2-1h16a3 3 0 0 1 3 3v35H41a3 3 0 0 1-3-3z" fill="#5e2b97"/></svg>
<span class="t w" style="left:1342px;top:555px;font-size:12.500px">ОС</span>
<span class="t" style="left:1378.500px;top:545px;font-size:28px;font-weight:bold;color:#6a3fa8">МСВСфера</span>

<!-- rows -->
<span class="t r" style="left:1229px;top:599.500px">Имя устройства</span>
<span class="t r" style="left:1536px;top:599.500px;color:#86898a;font-size:9.900px">localhost</span>
<svg class="i" style="left:1586px;top:595px" width="10" height="9"><path d="M0 4.500h8M5 1l3.500 3.500L5 8" fill="none" stroke="#86898a"/></svg>
<span class="t r" style="left:1229px;top:652.500px">Аппаратная модель</span><span class="t q" style="top:652.500px">Red Hat KVM</span>
<span class="t r" style="left:1229px;top:683.500px">Память</span><span class="t q" style="top:683.500px">3,6 ГиБ</span>
<span class="t r" style="left:1229px;top:715.500px">Процессор</span><span class="t q" style="top:715.500px;right:85px">12th Gen Intel® Core™ i7-1260P × 2</span>
<span class="t r" style="left:1229px;top:747px">Графика</span><span class="t q" style="top:747px">llvmpipe (LLVM 19.1.7, 256 bits)</span>
<span class="t r" style="left:1229px;top:778.500px">Ёмкость диска</span><span class="t q" style="top:778.500px">42,9 ГБ</span>
<span class="t r" style="left:1229px;top:831px">Название ОС</span><span class="t q" style="top:831px">МСВСфера 9.6 Сервер</span>
<span class="t r" style="left:1229px;top:862.500px">Тип ОС</span><span class="t q" style="top:862.500px">64-бит</span>
<span class="t r" style="left:1229px;top:894px">Версия GNOME</span><span class="t q" style="top:894px">40.4.0</span>
<span class="t r" style="left:1229px;top:925.500px">Оконный интерфейс</span><span class="t q" style="top:925.500px">Вэйланд</span>

<!-- VM panel -->
<svg class="i" style="left:927px;top:955px" width="29" height="18"><path d="M1 2h12v3L7.500 16H1zM28 16H16v-3L21.500 2H28z" fill="none" stroke="#fff" stroke-width="1.300"/></svg>
<svg class="i" style="left:976px;top:951px" width="26" height="26"><circle cx="13" cy="13" r="13" fill="#5a7fd0"/><path d="M13 0a13 13 0 0 1 11.500 7H13a6 6 0 0 0-5.500 3.500L3 4a13 13 0 0 1 10-4z" fill="#3f62ba"/><path d="M26 13a13 13 0 0 1-15 12.800L16 18a6 6 0 0 0 2-7h6a13 13 0 0 1 2 2z" fill="#a9bfe8"/><circle cx="13" cy="13" r="6" fill="#dfe7f6"/><circle cx="13" cy="13" r="4.500" fill="#5b8bea"/></svg>
<svg class="i" style="left:1024px;top:955px" width="27" height="19"><path d="M0 2a2 2 0 0 1 2-2h8l3 3h12a2 2 0 0 1 2 2v12a2 2 0 0 1-2 2H2a2 2 0 0 1-2-2z" fill="#0a8cf0"/></svg>
<svg class="i" style="left:1073px;top:952px" width="27" height="26"><rect x="0" y="5" width="24" height="19" fill="#e3e3e3"/><path d="M8 5V1h8v4" fill="none" stroke="#e3e3e3" stroke-width="1.500"/><circle cx="20" cy="20" r="6" fill="#3eaee0"/><path d="M20 16v6M17.500 20l2.500 2.500 2.500-2.500" fill="none" stroke="#fff" stroke-width="1.300"/></svg>
<div class="a" style="left:1115px;top:948px;width:38px;height:32px;background:#2d2d2d"></div>
<div class="a" style="left:1115px;top:979px;width:38px;height:2px;background:#ddd"></div>
<svg class="i" style="left:1121px;top:951px" width="26" height="26"><circle cx="13" cy="13" r="12.500" fill="#05305f"/><circle cx="13" cy="13" r="7.500" fill="none" stroke="#a8d2ee" stroke-width="1.600"/><circle cx="13" cy="13" r="1.800" fill="#a8d2ee"/><path d="M13 14v6M12 12.500l-6-3M14 12.500l6-3" stroke="#a8d2ee" stroke-width="1.400"/></svg>
<span class="t w" style="left:1565px;top:964.500px;font-size:10.400px;font-weight:bold;color:#e8e8e8">en</span>
<span class="t w" style="left:1605px;top:964.500px;font-size:9.500px;font-weight:bold;color:#e8e8e8">Вт, 3 июня&nbsp; 13:19</span>

<!-- taskbar -->
<div class="a" style="left:0;top:1002px;width:1680px;height:48px;background:#000"></div>
<svg class="i" style="left:12px;top:1015px" width="45" height="24"><path d="M2 2H21V7L11 22H2zM43 22H24V17L34 2H43z" fill="none" stroke="#fff" stroke-width="1.700"/></svg>
<svg class="i" style="left:86px;top:1008px" width="37" height="37"><path d="M0 18L18.500 5 37 18v17a2 2 0 0 1-2 2H2a2 2 0 0 1-2-2z" fill="#7f84cc"/><path d="M18.500 0L24 4H13z" fill="#5460b8"/><rect x="6" y="3" width="25" height="24" rx="1" fill="#e8e8e8"/><text x="18.500" y="18" font-size="13" text-anchor="middle" fill="#888" font-family="DejaVu Sans">@</text><path d="M0 18L18.500 30 37 18v17a2 2 0 0 1-2 2H2a2 2 0 0 1-2-2z" fill="#8f94d8"/><path d="M0 18L18.500 30 6 36z" fill="#6d72c4"/></svg>
<svg class="i" style="left:157px;top:1011px" width="38" height="29"><path d="M0 3a3 3 0 0 1 3-3h11l5 4h16a3 3 0 0 1 3 3v19a3 3 0 0 1-3 3H3a3 3 0 0 1-3-3z" fill="#0a8cf5"/><path d="M0 7h38v19a3 3 0 0 1-3 3H3a3 3 0 0 1-3-3z" fill="#0b90f2"/></svg>
<svg class="i" style="left:230px;top:1009px" width="39" height="36"><rect x="0" y="7" width="36" height="26" rx="1" fill="#e2e2e2"/><path d="M12 7V2h12v5" fill="none" stroke="#e2e2e2" stroke-width="2"/><circle cx="29" cy="28" r="8.500" fill="#3eaee0"/><path d="M29 22.500v7M25.500 27l3.500 3.500 3.500-3.500M25 33h8" fill="none" stroke="#fff" stroke-width="1.700"/></svg>
<svg class="i" style="left:301px;top:1007px" width="38" height="38"><circle cx="19" cy="19" r="19" fill="#5c80d2"/><path d="M19 0a19 19 0 0 1 16.500 9.500H19a9.500 9.500 0 0 0-8.300 5L4 6A19 19 0 0 1 19 0z" fill="#3a5cba"/><path d="M35.500 9.500A19 19 0 0 1 17 38l8-13a9.500 9.500 0 0 0 2-15.500z" fill="#a8bfeb"/><circle cx="19" cy="19" r="8.700" fill="#e7edf8"/><circle cx="19" cy="19" r="6.700" fill="#5c8df0"/></svg>
<div class="a" style="left:292px;top:1047px;width:56px;height:3px;background:#e0e0e0"></div>
<div class="a" style="left:364px;top:1002px;width:56px;height:48px;background:#3a3a3a"></div>
<div class="a" style="left:364px;top:1047px;width:56px;height:3px;background:#e0e0e0"></div>
<svg class="i" style="left:374px;top:1008px" width="36" height="36"><rect width="36" height="36" rx="6" fill="#26282b"/><rect x="8" y="9" width="20" height="19" fill="none" stroke="#0a82e8" stroke-width="2.400"/><rect x="13" y="14" width="10" height="9" fill="none" stroke="#0a82e8" stroke-width="2"/><path d="M8 9l5 5M28 9l-5 5M8 28l5-5M28 28l-5-5" stroke="#0a82e8" stroke-width="1.400"/><circle cx="8" cy="9" r="2.600" fill="#0a82e8"/><circle cx="28" cy="9" r="2.600" fill="#0a82e8"/><circle cx="8" cy="28" r="2.600" fill="#0a82e8"/><circle cx="28" cy="28" r="2.600" fill="#0a82e8"/></svg>

<span class="t" style="left:1343px;top:1026px;font-size:13.400px;font-weight:bold;color:#c8ddf0">en</span>
<span class="t" style="left:1405px;top:1026px;font-size:13.900px;font-weight:bold;color:#c8ddf0">Вт, 3 июня&nbsp; 13:19</span>
<svg class="i" style="left:1541px;top:1022px" width="8" height="8"><circle cx="4" cy="4" r="3.800" fill="#e6e6e6"/></svg>
<svg class="i" style="left:1582px;top:1018px" width="16" height="15"><rect x="5" y="0" width="6" height="5" rx="1" fill="#ddd"/><path d="M8 5v4M2.500 11V8.500h11V11M8 8.500V11" fill="none" stroke="#ddd" stroke-width="1.200"/><rect x="0" y="10" width="5" height="5" rx="1" fill="#ddd"/><rect x="5.500" y="10" width="5" height="5" rx="1" fill="#ddd"/><rect x="11" y="10" width="5" height="5" rx="1" fill="#ddd"/></svg>
<svg class="i" style="left:1609px;top:1017px" width="17" height="17"><path d="M1 6h3l4-4.500V15.500L4 11H1z" fill="#666" stroke="#ccc"/><path d="M11 5a4.500 4.500 0 0 1 0 7M13.500 2.500a8 8 0 0 1 0 12" fill="none" stroke="#ccc" stroke-width="1.200"/></svg>
<svg class="i" style="left:1640px;top:1017px" width="12" height="17"><rect x=".7" y="2" width="10.600" height="14.300" rx="1.500" fill="#555" stroke="#bbb"/><rect x="3.500" y="0" width="5" height="2" fill="#bbb"/><path d="M7 4.500L3.500 10H6l-1 4 3.500-5.500H6z" fill="#eee"/></svg>
<div class="a" style="left:1671px;top:1002px;width:1px;height:48px;background:#3a3a3a"></div>

</body></html>
